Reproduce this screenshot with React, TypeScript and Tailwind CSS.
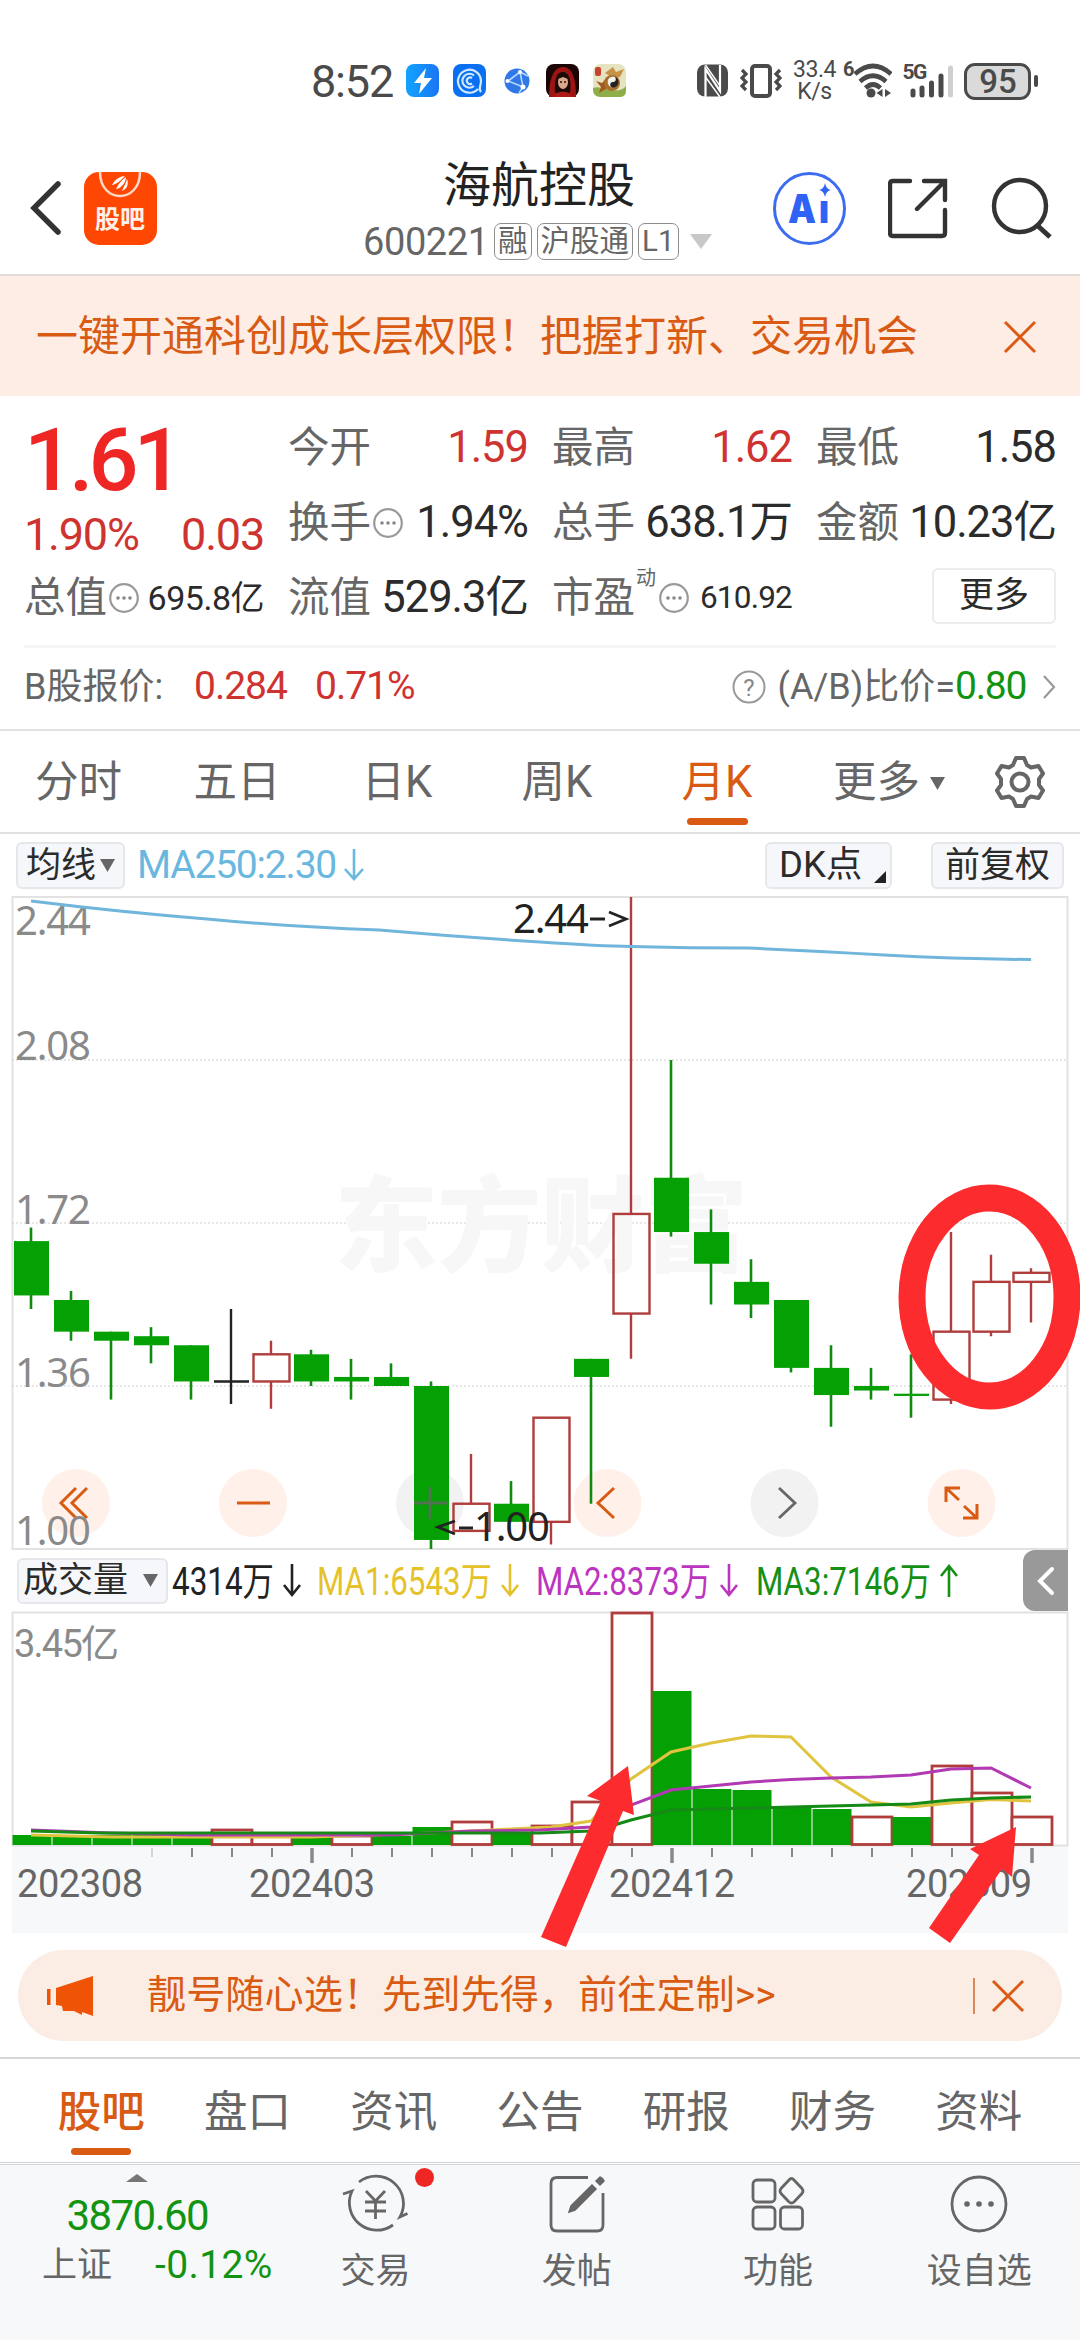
import type { ReactNode } from "react";
import { clsx } from "clsx";

const GREEN = "#04a004";
const RED = "#b03c3c";

// [body top, body bottom, high, low, direction]
type Candle = [number, number, number, number, "up" | "down" | "flat"];

const CANDLES: Candle[] = [
  [1.68, 1.56, 1.71, 1.53, "down"],
  [1.55, 1.48, 1.57, 1.46, "down"],
  [1.48, 1.46, 1.48, 1.33, "down"],
  [1.47, 1.45, 1.49, 1.41, "down"],
  [1.45, 1.37, 1.45, 1.33, "down"],
  [1.37, 1.37, 1.53, 1.32, "flat"],
  [1.43, 1.37, 1.46, 1.31, "up"],
  [1.43, 1.37, 1.44, 1.36, "down"],
  [1.38, 1.37, 1.42, 1.33, "down"],
  [1.38, 1.36, 1.41, 1.36, "down"],
  [1.36, 1.02, 1.37, 1.0, "down"],
  [1.1, 1.04, 1.21, 1.04, "up"],
  [1.1, 1.06, 1.15, 1.06, "down"],
  [1.29, 1.06, 1.29, 1.01, "up"],
  [1.42, 1.38, 1.42, 1.1, "down"],
  [1.74, 1.52, 2.44, 1.42, "up"],
  [1.82, 1.7, 2.08, 1.69, "down"],
  [1.7, 1.63, 1.75, 1.54, "down"],
  [1.59, 1.54, 1.64, 1.51, "down"],
  [1.55, 1.4, 1.55, 1.39, "down"],
  [1.4, 1.34, 1.45, 1.27, "down"],
  [1.36, 1.35, 1.4, 1.33, "down"],
  [1.343, 1.338, 1.43, 1.29, "down"],
  [1.48, 1.33, 1.7, 1.32, "up"],
  [1.59, 1.48, 1.65, 1.47, "up"],
  [1.61, 1.59, 1.62, 1.5, "up"],
];

// bar heights in px, same order as the candles
const VOLUMES = [10, 10, 10, 10, 10, 15, 9, 9, 9, 9, 18, 23, 12, 19, 43, 232, 154, 56, 55, 37, 36, 28, 28, 79, 52, 28];
const HOLLOW = [5, 6, 8, 11, 13, 14, 15, 21, 23, 24, 25];

const PERIODS = ["分时", "五日", "日K", "周K", "月K"];
const SECTIONS = ["股吧", "盘口", "资讯", "公告", "研报", "财务", "资料"];

const priceY = (p: number) => 1 + ((2.44 - p) / 1.44) * 652;
const candleX = (i: number) => 31 + i * 40;

function Dots() {
  return (
    <svg width="30" height="30" viewBox="0 0 30 30" className="ml-0.5 shrink-0">
      <circle cx="15" cy="15" r="13.8" fill="none" stroke="#999" strokeWidth="2.2" />
      <circle cx="9" cy="15" r="1.8" fill="#888" />
      <circle cx="15" cy="15" r="1.8" fill="#888" />
      <circle cx="21" cy="15" r="1.8" fill="#888" />
    </svg>
  );
}

function CloseIcon() {
  return (
    <svg width="34" height="34" viewBox="0 0 34 34" className="shrink-0">
      <path d="M2 2L32 32M32 2L2 32" stroke="#dd5a14" strokeWidth="3" />
    </svg>
  );
}

function Triangle({ className }: { className?: string }) {
  return (
    <svg width="15" height="13" viewBox="0 0 15 13" className={clsx("shrink-0", className)}>
      <path d="M0 0H15L7.5 13Z" fill="currentColor" />
    </svg>
  );
}

function StatusBar() {
  return (
    <div className="flex h-[142px] items-center pt-5 pl-[311px] text-[#4a4a4a]">
      <span className="w-[95px] text-[45px] leading-none tracking-[-1.2px]">8:52</span>
      <svg width="34" height="34" viewBox="0 0 34 34">
        <defs>
          <linearGradient id="bolt" x1="0" x2="1">
            <stop offset="0" stopColor="#12a3ff" />
            <stop offset="1" stopColor="#1b75f2" />
          </linearGradient>
        </defs>
        <rect width="33" height="33" rx="8" fill="url(#bolt)" />
        <path d="M20 4L8 19H15L13 30L26 14H18Z" fill="#fff" />
      </svg>
      <svg width="34" height="34" viewBox="0 0 34 34" className="ml-[13px]">
        <rect width="33" height="33" rx="8" fill="#0a6ff0" />
        <g fill="none" stroke="#cfeaff" strokeWidth="2.2">
          <path d="M25 25A11.5 11.5 0 1 1 28 17C28 22 25 25 28 28" />
          <path d="M21 22A7 7 0 1 1 21 11.5" />
          <path d="M19 19.5A3.3 3.3 0 1 1 19 14" />
        </g>
      </svg>
      <svg width="26" height="26" viewBox="0 0 26 26" className="ml-[17px]">
        <circle cx="13" cy="13" r="12.5" fill="#2f78e6" />
        <path d="M4 13L16 4L19 19L4 13M16 4L24 8M19 19L15 25" fill="none" stroke="#b9d6ff" strokeWidth="1.6" />
        <g fill="#fff">
          <circle cx="3.5" cy="13" r="2" />
          <circle cx="16" cy="4" r="2" />
          <circle cx="19" cy="19" r="2.5" />
        </g>
      </svg>
      <svg width="34" height="34" viewBox="0 0 34 34" className="ml-4">
        <rect width="33" height="33" rx="8" fill="#1b0605" />
        <path d="M3 33C3 14 8 3 17 3C26 3 30 14 30 33Z" fill="#9c1512" />
        <path d="M9 29C8 12 12 8 17 8C22 8 26 14 24 29Z" fill="#1c0a08" />
        <ellipse cx="17" cy="18" rx="5" ry="7" fill="#d9a98c" />
        <path d="M12 15C14 9 20 9 22 15L17 13Z" fill="#1c0a08" />
        <circle cx="15" cy="18" r="1" fill="#2b0d0b" />
        <circle cx="19" cy="18" r="1" fill="#2b0d0b" />
        <path d="M8 33C10 26 24 26 26 33Z" fill="#b01a16" />
      </svg>
      <svg width="34" height="34" viewBox="0 0 34 34" className="ml-[13px]">
        <rect width="33" height="33" rx="8" fill="#e6e4c0" />
        <path d="M0 24C8 20 24 33 33 22V27Q33 33 26 33H8Q0 33 0 26Z" fill="#8fae4a" />
        <rect x="2" y="3" width="6" height="9" rx="2" fill="#c8402f" />
        <path d="M12 9L20 3L23 8L31 5L27 13L20 14Z" fill="#c89246" />
        <path d="M3 17L9 19L14 13L13 25L6 29L8 23Z" fill="#a35a1f" />
        <circle cx="19" cy="19" r="8" fill="#a8702a" />
        <circle cx="20" cy="18" r="5.5" fill="#222" />
        <path d="M20 12.5A2.75 2.75 0 0 1 20 18A2.75 2.75 0 0 0 20 23.5A5.5 5.5 0 0 1 20 12.5" fill="#f4f1e4" />
      </svg>

      <svg width="32" height="34" viewBox="0 0 32 34" className="ml-[70px]">
        <rect y="0.5" width="31" height="32" rx="8" fill="#4a4a4a" />
        <path d="M8.5 33V5L23 27V1" fill="none" stroke="#fff" strokeWidth="2.2" />
        <path d="M8.5 1L23 22M8.5 13L23 33" stroke="#fff" strokeWidth="1.4" />
      </svg>
      <svg width="42" height="34" viewBox="0 0 42 34" className="ml-[11px]" fill="none" stroke="#4a4a4a">
        <rect x="12" y="2" width="18" height="30" rx="3" strokeWidth="4" />
        <path d="M2 6L6 10L2 14L6 18L2 22L6 26M40 6L36 10L40 14L36 18L40 22L36 26" strokeWidth="3.2" />
      </svg>
      <div className="ml-2.5 w-[45px] text-center text-[23px] leading-[22px] tracking-[-0.5px]">
        <div>33.4</div>
        <div>K/s</div>
      </div>
      <span className="ml-1.5 -mt-6 text-[20px] leading-none font-bold">6</span>
      <svg width="38" height="36" viewBox="0 0 38 36" fill="none" stroke="#4a4a4a" strokeWidth="4.6">
        <path d="M1 11Q19 -5 37 11M6 18.5Q19 7 32 18.5M11.5 25Q19 18 26.5 25" />
        <circle cx="17" cy="30" r="4.5" fill="#4a4a4a" stroke="none" />
        <path d="M28.5 26V34L22.5 30ZM31 26V34L37 30Z" fill="#4a4a4a" stroke="none" />
      </svg>
      <div className="relative ml-[10px] h-9 w-[54px]">
        <span className="absolute -top-px left-0 text-[21px] leading-none font-bold tracking-[-1.5px]">5G</span>
        <svg width="54" height="36" viewBox="0 0 54 36" className="absolute top-0 left-0" strokeWidth="5" strokeLinecap="round">
          <path d="M11 28V32M20 25V32M29.5 20V32M39 13V32" stroke="#4a4a4a" />
          <path d="M48.5 5V32" stroke="#cfcfcf" />
        </svg>
      </div>
      <div className="ml-[8px] flex h-[37px] w-[67px] items-center justify-center rounded-[11px] border-[3px] border-[#4a4a4a] bg-[#dadada] text-[33px] leading-none font-medium">
        95
      </div>
      <div className="ml-[3px] h-3 w-1 rounded-sm bg-[#4a4a4a]" />
    </div>
  );
}

function Tag({ children }: { children: ReactNode }) {
  return (
    <span className="flex h-[37px] shrink-0 items-center rounded-[7px] border-[1.5px] border-[#8d8d8d] px-[3px] text-[29.5px] leading-none whitespace-nowrap">
      {children}
    </span>
  );
}

function Header() {
  return (
    <header className="flex h-[134px] items-center border-b-2 border-[#e3dcd8] pl-[29px]">
      <svg width="34" height="54" viewBox="0 0 34 54">
        <path d="M29 3L5 27L29 51" fill="none" stroke="#333" strokeWidth="5.5" strokeLinecap="round" />
      </svg>
      <div className="relative ml-[21px] h-[73px] w-[73px] overflow-hidden rounded-[15px] bg-[#fd4703]">
        <svg width="73" height="73" viewBox="0 0 73 73" className="absolute inset-0">
          <path d="M16 0C16 32 56 32 56 0" fill="none" stroke="#ffd9c8" strokeWidth="2.5" />
          <path d="M28 13C31 7 37 4 41 4C38 7 34 12 28 13ZM32 17C35 11 38 8 42 5C42 10 38 16 32 17ZM38 19C40 14 42 11 43 7C45 12 43 17 38 19Z" fill="#fff" />
        </svg>
        <span className="absolute top-[35px] left-[11px] text-[25px] leading-none font-bold text-[#fff1ea]">股吧</span>
      </div>
      <div className="ml-[206px] flex w-[352px] flex-col items-center">
        <h1 className="text-[48px] leading-[60px] text-[#222]">海航控股</h1>
        <div className="mt-[7px] flex w-full items-center gap-[5px] text-[#666]">
          <span className="w-[126px] text-[38px] leading-none tracking-[-0.4px]">600221</span>
          <Tag>融</Tag>
          <Tag>沪股通</Tag>
          <Tag>L1</Tag>
          <svg width="22" height="16" viewBox="0 0 22 16" className="ml-1.5 shrink-0">
            <path d="M0 0H22L11 15Z" fill="#c8c8c8" />
          </svg>
        </div>
      </div>
      <div className="ml-[58px] flex h-[73px] w-[73px] items-center justify-center rounded-full border-[3.5px] border-[#3c6cf0]">
        <svg width="50" height="50" viewBox="0 0 50 50" fontFamily="Inter, sans-serif" fontWeight="900" fill="#2f63f5">
          <text x="3" y="40" fontSize="40" textLength="28" lengthAdjust="spacingAndGlyphs">A</text>
          <text x="34" y="40" fontSize="40" textLength="10" lengthAdjust="spacingAndGlyphs">ı</text>
          <path d="M40 0Q41 6 46 7Q41 8 40 14Q39 8 34 7Q39 6 40 0Z" />
        </svg>
      </div>
      <svg width="62" height="62" viewBox="0 0 62 62" className="ml-[42px]" fill="none" stroke="#333" strokeWidth="4.4" strokeLinecap="round">
        <path d="M22 4H5Q2 4 2 7V56Q2 59 5 59H54Q57 59 57 56V33M36 4H57V23M57 4L29 32" />
      </svg>
      <svg width="64" height="64" viewBox="0 0 64 64" className="ml-[41px]" fill="none" stroke="#333" strokeWidth="4.4">
        <circle cx="29" cy="30" r="26" />
        <path d="M47 50L59 61" strokeWidth="5" />
      </svg>
    </header>
  );
}

function Cell({ label, value, tone, dots, small }: { label: string; value: string; tone?: "red"; dots?: boolean; small?: boolean }) {
  return (
    <div className="flex h-[75px] items-center">
      <span className="text-[41.5px] leading-none whitespace-nowrap text-[#666]">{label}</span>
      {dots && <Dots />}
      <span
        className={clsx(
          "ml-auto leading-none whitespace-nowrap",
          small ? "text-[34px] tracking-[-0.5px]" : "text-[43.5px] tracking-[-1px]",
          tone === "red" ? "text-[#cf3330]" : "text-[#2b2b2b]"
        )}
      >
        {value}
      </span>
    </div>
  );
}

function Quote() {
  return (
    <section className="px-[24px] pt-[14px]">
      <div className="grid h-[235px] grid-cols-4 gap-6">
        <div>
          <div className="flex h-[95px] items-center pt-1 text-[88px] leading-none font-medium tracking-[-5px] text-[#ee2624]">1.61</div>
          <div className="flex h-[55px] items-center justify-between pt-1 text-[45px] leading-none tracking-[-1.2px] text-[#cf3330]">
            <span>1.90%</span>
            <span>0.03</span>
          </div>
          <Cell label="总值" value="695.8亿" dots small />
        </div>
        <div>
          <Cell label="今开" value="1.59" tone="red" />
          <Cell label="换手" value="1.94%" dots />
          <Cell label="流值" value="529.3亿" />
        </div>
        <div>
          <Cell label="最高" value="1.62" tone="red" />
          <Cell label="总手" value="638.1万" />
          <div className="flex h-[75px] items-center">
            <span className="text-[41.5px] leading-none text-[#666]">市盈</span>
            <span className="-mt-10 w-[22px] text-center text-[20px] leading-none text-[#666]">动</span>
            <Dots />
            <span className="ml-auto text-[31.5px] leading-none tracking-[-0.8px] text-[#2b2b2b]">610.92</span>
          </div>
        </div>
        <div>
          <Cell label="最低" value="1.58" />
          <Cell label="金额" value="10.23亿" />
          <div className="flex h-[75px] items-center justify-end">
            <button className="-mt-1 h-[56px] w-[124px] rounded-md border-2 border-[#ececee] text-[35px] leading-none text-[#2b2b2b]">更多</button>
          </div>
        </div>
      </div>
      <div className="flex h-[84px] items-center border-t-[3px] border-[#f5f5f6] pb-1 text-[36px] leading-none text-[#666]">
        <span className="w-[170px]">B股报价:</span>
        <span className="w-[121px] text-[39px] tracking-[-1px] text-[#cf3330]">0.284</span>
        <span className="text-[39px] tracking-[-1px] text-[#cf3330]">0.71%</span>
        <svg width="34" height="34" viewBox="0 0 34 34" className="mr-3 ml-auto">
          <circle cx="17" cy="17" r="15.5" fill="none" stroke="#999" strokeWidth="2" />
          <text x="17" y="26" fontSize="24" textAnchor="middle" fill="#888">?</text>
        </svg>
        <span>(A/B)比价=</span>
        <span className="w-[71px] text-[39px] tracking-[-1.2px] text-[#129412]">0.80</span>
        <svg width="14" height="26" viewBox="0 0 14 26" className="ml-4">
          <path d="M2 2L12 13L2 24" fill="none" stroke="#999" strokeWidth="2.2" />
        </svg>
      </div>
    </section>
  );
}

function PeriodTabs() {
  return (
    <nav className="flex h-[105px] items-center border-y-2 border-[#e2e2e4] text-[43.5px] leading-none text-[#666]">
      {PERIODS.map((p, i) => (
        <div
          key={p}
          className={clsx("relative flex h-full items-center justify-center pt-[3px]", i === 0 ? "w-[157px]" : "w-[160px]", p === "月K" && "text-[#d95b13]")}
        >
          {p}
          {p === "月K" && <span className="absolute bottom-[7px] h-[7px] w-[61px] rounded-full bg-[#d95b13]" />}
        </div>
      ))}
      <div className="ml-[36px] flex items-center gap-2.5 pt-[3px]">
        更多
        <Triangle />
      </div>
      <svg width="54" height="54" viewBox="0 0 54 54" className="ml-[48px]" fill="none" stroke="#666" strokeWidth="4" strokeLinejoin="round">
        <path d="M23 3H31L34 10L38 12.5L45.5 11L50 18.5L46 24V30L50 35.5L45.5 43L38 41.5L34 44L31 51H23L20 44L16 41.5L8.5 43L4 35.5L8 30V24L4 18.5L8.5 11L16 12.5L20 10Z" />
        <circle cx="27" cy="27" r="8.5" />
      </svg>
    </nav>
  );
}

function PriceHeader() {
  return (
    <div className="flex h-[62px] items-center pr-4 pl-4 text-[35px] leading-none text-[#2b2b2b]">
      <div className="flex h-[47px] w-[109px] items-center justify-center gap-1 rounded-md border-2 border-[#e6e7ea] bg-[#f6f7fa]">
        均线
        <Triangle className="text-[#666]" />
      </div>
      <span className="ml-[12px] text-[39px] tracking-[-1.2px] text-[#6ab7e0]">MA250:2.30</span>
      <svg width="22" height="34" viewBox="0 0 22 34" className="ml-[7px] text-[#6ab7e0]">
        <path d="M11 1V31M2 21L11 31L20 21" fill="none" stroke="currentColor" strokeWidth="2.6" />
      </svg>
      <div className="relative ml-auto flex h-[47px] w-[127px] items-center rounded-md border-2 border-[#e6e7ea] bg-[#f6f7fa] pl-3 text-[36.5px]">
        DK点
        <svg width="12" height="12" viewBox="0 0 12 12" className="absolute right-1 bottom-1">
          <path d="M12 0V12H0Z" fill="#222" />
        </svg>
      </div>
      <div className="ml-[39px] flex h-[47px] w-[133px] items-center justify-center rounded-md border-2 border-[#e6e7ea] bg-[#f6f7fa]">
        前复权
      </div>
    </div>
  );
}

function PriceChart() {
  return (
    <svg width="1080" height="654" viewBox="0 0 1080 654" className="block">
      <rect x="12.5" y="1" width="1055" height="652" fill="none" stroke="#e2e2e2" strokeWidth="2" />
      {[2.08, 1.72, 1.36].map((p) => (
        <line key={p} x1="12" x2="1067" y1={priceY(p)} y2={priceY(p)} stroke="#d0d0d0" strokeWidth="1.2" strokeDasharray="2 2" />
      ))}
      <text x="334" y="368" fontSize="104" fontWeight="900" fill="#f7f7f7" textLength="414">东方财富</text>

      {/* floating controls */}
      {[76, 253, 430, 607.5, 784.5, 961.5].map((x, i) => (
        <circle key={x} cx={x} cy="607" r="34" fill={i === 2 || i === 4 ? "#f2f2f2" : "#fff1ea"} />
      ))}

      <g fontFamily='"Noto Sans", sans-serif' fontSize="40" fill="#8a8a8a">
        <text x="15" y="39" textLength="76">2.44</text>
        <text x="15" y="164" textLength="76">2.08</text>
        <text x="15" y="328" textLength="76">1.72</text>
        <text x="15" y="491" textLength="76">1.36</text>
      </g>

      {CANDLES.map(([top, bottom, high, low, dir], i) => {
        const x = candleX(i);
        const y1 = priceY(top);
        const y2 = priceY(bottom);
        if (dir === "flat") {
          return <path key={i} d={`M${x} ${priceY(high)}V${priceY(low)}M${x - 17} ${y1}H${x + 18}`} stroke="#222" strokeWidth="2.4" />;
        }
        if (dir === "up") {
          return (
            <g key={i} fill="none" stroke={RED} strokeWidth="2.4">
              <path d={`M${x} ${priceY(high)}V${y1}M${x} ${y2}V${priceY(low)}`} />
              <rect x={x - 17.5} y={y1} width="36" height={y2 - y1} />
            </g>
          );
        }
        return (
          <g key={i}>
            <path d={`M${x} ${priceY(high)}V${priceY(low)}`} stroke="#128a12" strokeWidth="2.6" />
            <rect x={x - 17} y={y1} width="35" height={y2 - y1} fill={GREEN} />
          </g>
        );
      })}

      <path d="M31 5Q120 16 207 23Q290 31 379 34Q460 41 540 46Q600 50 631 50.5Q690 52 747 52Q820 55 884 59Q960 63 1031 63.5" fill="none" stroke="#70b5dc" strokeWidth="3" />

      <g fill="none" stroke="#d95b13" strokeWidth="3">
        <path d="M76 592L61 607L76 622M87 592L72 607L87 622" />
        <path d="M237 607H270" />
        <path d="M614 592L598 607L614 622" />
        <path d="M959 604L946 592M946 606V592H960M964 610L977 622M977 608V622H963" />
      </g>
      <path d="M414 607H447M430 591V623" stroke="#666" strokeOpacity="0.8" strokeWidth="2.8" />
      <path d="M779 592L795 607L779 622" fill="none" stroke="#666" strokeWidth="2.8" />

      <g fontFamily='"Noto Sans", sans-serif' fontSize="40">
        <text x="15" y="649" textLength="76" fill="#8a8a8a">1.00</text>
        <text x="513" y="37" textLength="76" fill="#222">2.44</text>
        <path d="M590 23H605M609 16L626 23L609 30" fill="none" stroke="#222" strokeWidth="2.8" />
        <text x="474" y="645" textLength="76" fill="#222">1.00</text>
        <path d="M473 632H459M455 625L438 631L455 638" fill="none" stroke="#222" strokeWidth="2.8" />
      </g>
    </svg>
  );
}

function VolStat({ text, up, width, className }: { text: string; up?: boolean; width: number; className: string }) {
  return (
    <svg width={width + 28} height="44" viewBox={`0 0 ${width + 28} 44`} className={clsx("shrink-0", className)}>
      <text x="0" y="36" fontSize="39" textLength={width} lengthAdjust="spacingAndGlyphs" fill="currentColor">{text}</text>
      <path
        transform={`translate(${width + 9} 5)`}
        d={up ? "M9 33V2M1 12L9 2L17 12" : "M9 0V31M1 21L9 31L17 21"}
        fill="none"
        stroke="currentColor"
        strokeWidth="2.6"
      />
    </svg>
  );
}

function VolumeHeader() {
  return (
    <div className="flex h-[61px] items-center pr-3 pl-[17px] text-[#2b2b2b]">
      <div className="flex h-[46px] w-[151px] items-center justify-between rounded-md border-2 border-[#e6e7ea] bg-[#f6f7fa] pr-2 pl-1 text-[35px] leading-none">
        成交量
        <Triangle className="text-[#666]" />
      </div>
      <VolStat text="4314万" width={102} className="ml-1 text-[#222]" />
      <VolStat text="MA1:6543万" width={175} className="ml-[15px] text-[#e5c22a]" />
      <VolStat text="MA2:8373万" width={175} className="ml-[16px] text-[#bb35bf]" />
      <VolStat text="MA3:7146万" width={175} up className="ml-[17px] text-[#159015]" />
      <div className="ml-auto flex h-[61px] w-[45px] items-center justify-center rounded-l-xl bg-[#999]">
        <svg width="20" height="30" viewBox="0 0 20 30">
          <path d="M16 3L4 15L16 27" fill="none" stroke="#fff" strokeWidth="4" strokeLinecap="round" />
        </svg>
      </div>
    </div>
  );
}

function VolumeChart() {
  return (
    <svg width="1080" height="322" viewBox="0 0 1080 322" className="block">
      <rect x="12" y="235" width="1056" height="87" fill="#f7f8fa" />
      <rect x="12.5" y="1.5" width="1055" height="233" fill="none" stroke="#e2e2e2" strokeWidth="2" />
      <text x="14" y="46" fontSize="38" fill="#8a8a8a" textLength="105">3.45亿</text>
      {VOLUMES.map((h, i) => {
        const x = 12 + i * 40;
        return HOLLOW.includes(i) ? (
          <rect key={i} x={x} y={234 - h} width="40" height={h - 0.5} fill="#fff" stroke={RED} strokeWidth="2.8" />
        ) : (
          <rect key={i} x={x + 0.5} y={234 - h} width="39" height={h} fill={GREEN} />
        );
      })}
      <g fill="none" strokeWidth="3">
        <path d="M31 224L111 226H311L431 222L511 218L551 216L591 210L631 168L671 141L711 132L751 125L791 126L831 166L871 191L911 196L951 192L991 188.5L1031 190" stroke="#e0c440" />
        <path d="M31 219L111 222L190 224H390L471 220L540 219L591 216L631 194L671 179L751 171L791 168.5L831 167L871 166L911 164L951 158L991 157L1031 177" stroke="#b13ab4" />
        <path d="M31 220L100 222H540L591 220L611 215L631 209L671 199L751 197L831 195L911 193L951 189L991 187L1031 186" stroke="#168a16" />
      </g>
      <g stroke="#888">
        {Array.from({ length: 23 }, (_, i) => 152 + i * 40).map((x, i) => {
          const major = x === 312 || x === 672 || x === 1032;
          return <line key={x} x1={x} x2={x} y1="237" y2={major ? 252 : 246} strokeWidth={major ? 3.5 : 2} opacity={i === 0 ? 0.3 : 1} />;
        })}
      </g>
      <g fontSize="38" fill="#666">
        <text x="17" y="286" textLength="126">202308</text>
        <text x="249" y="286" textLength="126">202403</text>
        <text x="609" y="286" textLength="126">202412</text>
        <text x="906" y="286" textLength="126">202509</text>
      </g>
    </svg>
  );
}

// hand-drawn marks on top of both charts, origin at the top of the price chart
function Marks() {
  return (
    <svg width="1080" height="1060" viewBox="0 0 1080 1060" className="pointer-events-none absolute top-0 left-0">
      <ellipse cx="989.5" cy="401" rx="77.5" ry="99" fill="none" stroke="#fc2b2e" strokeWidth="27" />
      <path d="M541 1041L601 905L587 900L628 870L634 919L623 915L566 1051Z" fill="#fc2b2e" />
      <path d="M929 1032L979 959L970 953L1016 931L1012 981L1002 973L950 1047Z" fill="#fc2b2e" />
    </svg>
  );
}

function Promo() {
  return (
    <div className="px-[18px] pt-[17px] pb-4">
      <div className="flex h-[91px] items-center rounded-full bg-[#fcede4] pr-[37px] pl-7 text-[39.2px] leading-none text-[#d95b13]">
        <svg width="50" height="42" viewBox="0 0 50 42" fill="#ef5306">
          <rect x="1" y="14" width="3.5" height="16" />
          <path d="M10 13L47 1V41L36 37V40L28 36L17 36L16 31L10 30Z" />
        </svg>
        <span className="ml-[51px]">靓号随心选！先到先得，前往定制&gt;&gt;</span>
        <span className="ml-auto h-9 w-0.5 bg-[#d98a5c]" />
        <span className="ml-4">
          <CloseIcon />
        </span>
      </div>
    </div>
  );
}

function SectionTabs() {
  return (
    <nav className="flex h-[106px] border-t-2 border-b border-[#d5d6d8] px-[28px] text-[43.5px] leading-none text-[#666]">
      {SECTIONS.map((s, i) => (
        <div key={s} className={clsx("relative flex flex-1 items-center justify-center pt-1", i === 0 && "font-medium text-[#d95b13]")}>
          {s}
          {i === 0 && <span className="absolute bottom-[7px] h-[7px] w-[60px] rounded-full bg-[#d95b13]" />}
        </div>
      ))}
    </nav>
  );
}

function BarItem({ label, badge, children }: { label: string; badge?: boolean; children: ReactNode }) {
  return (
    <div className="flex w-[201.5px] flex-col items-center text-[#666]">
      <div className="relative mt-[8px] h-[62px]">
        <svg width="70" height="62" viewBox="0 0 70 62" fill="none" stroke="currentColor" strokeWidth="2.8">
          {children}
        </svg>
        {badge && <span className="absolute -top-[5px] left-[75px] h-[19px] w-[19px] rounded-full bg-[#ee2624]" />}
      </div>
      <span className="mt-[19px] text-[35px] leading-none">{label}</span>
    </div>
  );
}

function BottomBar() {
  return (
    <footer className="mt-px flex h-[176px] border-t border-[#d5d6d8] bg-[#f7f8fa]">
      <div className="flex w-[275px] flex-col items-center">
        <svg width="22" height="8" viewBox="0 0 22 8" className="mt-[9px]">
          <path d="M11 0L22 8H0Z" fill="#777" />
        </svg>
        <div className="mt-[13px] text-[42px] leading-none tracking-[-1.6px] text-[#129412]">3870.60</div>
        <div className="mt-[9px] ml-[42px] flex items-center self-start text-[35px] leading-none text-[#666]">
          上证
          <span className="ml-[43px] text-[39px] tracking-[0.4px] text-[#129412]">-0.12%</span>
        </div>
      </div>
      <BarItem label="交易" badge>
        <path d="M19 9A27.5 27.5 0 0 1 60 44L67.5 40.500M53 52A27.500 27.500 0 0 1 12 18L3 21" />
        <path d="M26 18L35.500 28L45 18M35.500 28V46M25 29H46M25 38H46" />
      </BarItem>
      <BarItem label="发帖">
        <path d="M46 4.500H15Q9 4.500 9 10.500V52Q9 58 15 58H55Q61 58 61 52V20" />
        <path d="M27 39L29 33L50 12L54 16L33 37ZM54 8L58 4Q61 5 62 8L58 12Z" fill="currentColor" strokeWidth="1.500" />
      </BarItem>
      <BarItem label="功能">
        <rect x="10" y="7" width="22" height="22" rx="4" />
        <rect x="10" y="34" width="22" height="22" rx="4" />
        <rect x="37.500" y="34" width="22" height="22" rx="4" />
        <path d="M46 7Q48.500 4 51 7L59 15.500Q61 18 59 20.500L51 29Q48.500 31 46 29L38 20.500Q36 18 38 15.500Z" />
      </BarItem>
      <BarItem label="设自选">
        <circle cx="35" cy="31" r="27" />
        <g fill="currentColor" stroke="none">
          <circle cx="23" cy="31" r="2.8" />
          <circle cx="35" cy="31" r="2.8" />
          <circle cx="47" cy="31" r="2.8" />
        </g>
      </BarItem>
    </footer>
  );
}

export default function App() {
  return (
    <div className='h-[2340px] w-[1080px] overflow-hidden bg-white font-["Roboto","Noto_Sans_CJK_SC",sans-serif]'>
      <StatusBar />
      <Header />
      <div className="flex h-[120px] items-center justify-between bg-[#fdede5] pt-0.5 pr-[43px] pl-[36px] text-[42px] leading-none text-[#d95b13]">
        <span>一键开通科创成长层权限！把握打新、交易机会</span>
        <CloseIcon />
      </div>
      <Quote />
      <PeriodTabs />
      <PriceHeader />
      <div className="relative">
        <PriceChart />
        <VolumeHeader />
        <VolumeChart />
        <Marks />
      </div>
      <Promo />
      <SectionTabs />
      <BottomBar />
    </div>
  );
}
